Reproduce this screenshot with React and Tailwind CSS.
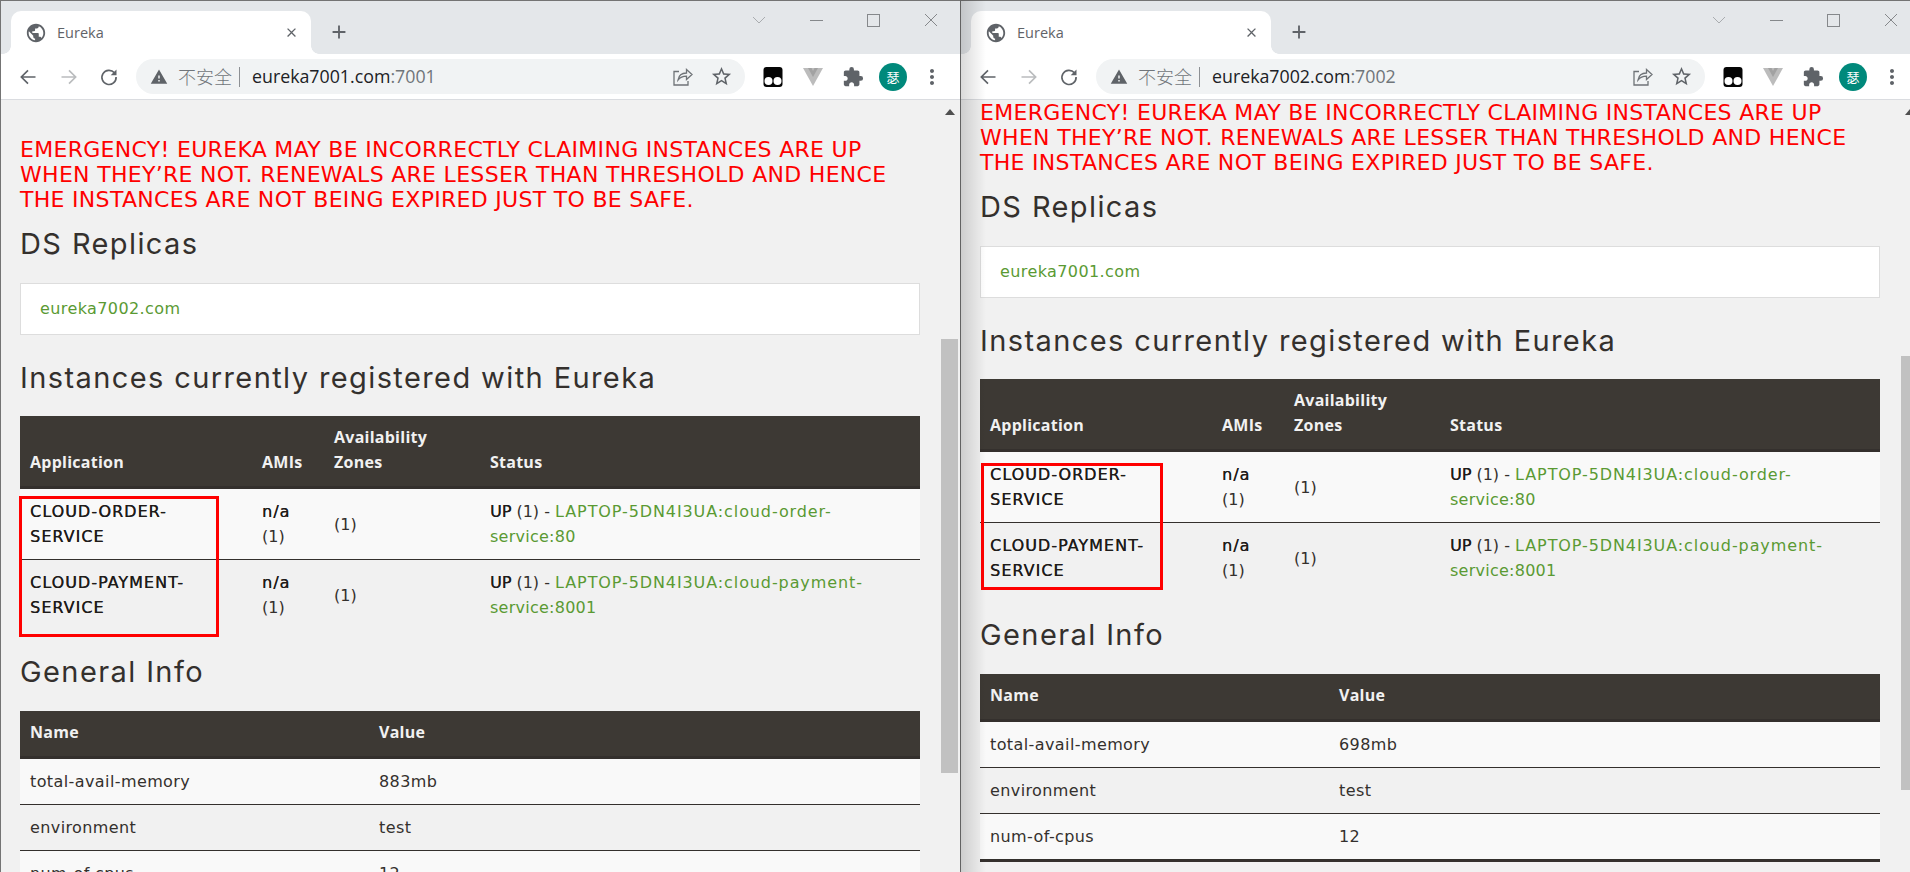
import React from "react";
import { MdPublic, MdClose, MdAdd, MdWarning, MdStarBorder, MdExtension, MdMoreVert } from "react-icons/md";

const bodyFont = "font-['DejaVu_Sans',sans-serif]";
const headFont = "font-['Inter',sans-serif]";
const thClass = "px-[10px] pt-[9px] pb-[11px] font-['Open_Sans',sans-serif] text-[16px] font-bold tracking-[0.25px]";
const linkClass = "text-[#5a9a33]";
const strongClass = "text-[#1f1c1a] [text-shadow:0.3px_0_0_#1f1c1a]";

/* ================= Browser chrome ================= */
function TabStrip() {
  return (
    <div className="flex h-[53px] bg-[#e4e7ea]">
      <div className="relative mt-[10px] ml-[10px] flex h-[43px] w-[300px] items-center rounded-t-[10px] bg-white pl-[14px]">
        <span className="absolute bottom-0 -left-2 h-2 w-2 bg-[radial-gradient(circle_at_0_0,transparent_7.5px,white_8px)]" />
        <span className="absolute -right-2 bottom-0 h-2 w-2 bg-[radial-gradient(circle_at_100%_0,transparent_7.5px,white_8px)]" />
        <MdPublic size={22} className="text-[#5f6368]" />
        <span className="ml-[10px] font-['Open_Sans',sans-serif] text-[14.500px] text-[#5f6368]">Eureka</span>
        <MdClose size={15} className="absolute top-[14px] right-[12px] text-[#5f6368]" />
      </div>
      <MdAdd size={22} className="mt-[20px] ml-[17px] text-[#5f6368]" />
      <div className="ml-auto flex h-[38px] text-[#8a8d90]">
        <div className="flex w-[57.5px] items-center justify-center">
          <svg width="14" height="8" viewBox="0 0 14 8" fill="none" stroke="#a9acaf" strokeWidth="1"><path d="M1 1l6 6 6-6" /></svg>
        </div>
        <div className="flex w-[57.5px] items-center justify-center">
          <div className="h-px w-[13px] bg-[#85888b]" />
        </div>
        <div className="flex w-[57.5px] items-center justify-center">
          <div className="h-[13px] w-[13px] border border-[#85888b]" />
        </div>
        <div className="flex w-[57.5px] items-center justify-center">
          <svg width="14" height="14" viewBox="0 0 14 14" fill="none" stroke="#85888b" strokeWidth="1"><path d="M1 1l12 12M13 1L1 13" /></svg>
        </div>
      </div>
    </div>
  );
}

function Toolbar({ host, port }) {
  return (
    <div className="flex h-[46px] items-center border-b border-[#dadce0] bg-white pl-[7px]">
      <div className="flex w-10 justify-center">
        <svg width="20" height="20" viewBox="0 0 24 24" fill="none" stroke="#5f6368" strokeWidth="2"><path d="M21 12H4M12 4l-8 8 8 8" /></svg>
      </div>
      <div className="flex w-[41px] justify-center">
        <svg width="20" height="20" viewBox="0 0 24 24" fill="none" stroke="#babcbe" strokeWidth="2"><path d="M3 12h17M12 4l8 8-8 8" /></svg>
      </div>
      <div className="flex w-10 justify-center">
        <svg width="20" height="20" viewBox="0 0 24 24" fill="none" stroke="#5f6368" strokeWidth="2">
          <path d="M18.5 7A8.5 8.5 0 1 0 20.5 12" />
          <path d="M21 3v7h-7z" fill="#5f6368" stroke="none" />
        </svg>
      </div>
      <div className="ml-[7px] flex h-[35px] w-[609px] items-center rounded-full bg-[#f1f3f4] pl-[14px]">
        <MdWarning size={18} className="text-[#5f6368]" />
        <span className="ml-[10px] font-['Noto_Sans_CJK_SC',sans-serif] text-[18px] font-light text-[#70757a]">不安全</span>
        <span className="mx-[7px] h-[20px] w-px bg-[#8d9094]" />
        <span className="ml-[5px] font-['Open_Sans',sans-serif] text-[17.800px] text-[#202124]">
          {host}
          <span className="text-[#70757a]">{port}</span>
        </span>
        <svg className="ml-auto" width="20" height="19" viewBox="0 0 20 19" fill="none" stroke="#6f7377" strokeWidth="1.3">
          <path d="M6 4.500H1v13.500h14v-4" />
          <path d="M5 13c.7-4.500 4-7 8.500-7V2.500l5.500 5-5.500 5V9.200C9.500 9.200 7 10.500 5 13z" />
        </svg>
        <MdStarBorder size={23} className="mr-[12px] ml-[17px] text-[#5f6368]" />
      </div>
      <div className="ml-[13px] flex w-[30px] justify-center">
        <svg width="20" height="20" viewBox="0 0 20 20">
          <rect x="0.500" y="0" width="19" height="20" rx="3" fill="#050505" />
          <circle cx="5.500" cy="14" r="4" fill="#fff" />
          <circle cx="14.500" cy="14" r="4" fill="#fff" />
        </svg>
      </div>
      <div className="ml-[10px] flex w-[30px] justify-center">
        <svg width="20" height="18" viewBox="0 0 20 18">
          <path d="M0 0h20L10 18z" fill="#bcbcbc" />
          <path d="M5 0h3.500L10 3l1.500-3H15l-5 9z" fill="#a2a2a2" />
        </svg>
      </div>
      <div className="ml-[10px] flex w-[30px] justify-center">
        <MdExtension size={22} className="text-[#5f6368]" />
      </div>
      <div className="ml-[11px] flex h-[28px] w-[28px] items-center justify-center rounded-full bg-[#00897b] font-['Noto_Sans_CJK_SC',sans-serif] text-[13px] text-white">
        瑟
      </div>
      <div className="ml-[10px] flex w-[30px] justify-center">
        <MdMoreVert size={24} className="text-[#5f6368]" />
      </div>
    </div>
  );
}

/* ================= Eureka page ================= */
const warningLines = [
  "EMERGENCY! EUREKA MAY BE INCORRECTLY CLAIMING INSTANCES ARE UP",
  "WHEN THEY’RE NOT. RENEWALS ARE LESSER THAN THRESHOLD AND HENCE",
  "THE INSTANCES ARE NOT BEING EXPIRED JUST TO BE SAFE.",
];

const instances = [
  { first: "CLOUD-ORDER-", second: "SERVICE", link1: "LAPTOP-5DN4I3UA:cloud-order-", link2: "service:80" },
  { first: "CLOUD-PAYMENT-", second: "SERVICE", link1: "LAPTOP-5DN4I3UA:cloud-payment-", link2: "service:8001" },
];

function Heading({ children, className }) {
  return (
    <h2 className={`${headFont} h-[34px] text-[29px] leading-[34px] tracking-[1.4px] whitespace-nowrap text-[#34302d] ${className}`}>
      {children}
    </h2>
  );
}

function InstanceTable() {
  return (
    <table className="mt-[21px] w-full table-fixed border-collapse text-[16px] leading-[25px] text-[#34302d]">
      <colgroup>
        <col className="w-[232px]" />
        <col className="w-[72px]" />
        <col className="w-[156px]" />
        <col />
      </colgroup>
      <thead className="bg-[#3d3934] text-left text-[#f1f1f1]">
        <tr className="border-b-[3px] border-[#34302d]">
          <th className={`${thClass} align-bottom`}>Application</th>
          <th className={`${thClass} align-bottom`}>AMIs</th>
          <th className={`${thClass} align-bottom`}>Availability<br />Zones</th>
          <th className={`${thClass} align-bottom`}>Status</th>
        </tr>
      </thead>
      <tbody>
        {instances.map((row, i) => (
          <tr key={row.first} className={i === 0 ? "border-b border-[#34302d] bg-[#f9f9f9]" : "bg-[#f1f1f1]"}>
            <td className={`px-[10px] py-[10px] tracking-[1px] ${strongClass}`}>{row.first}<br />{row.second}</td>
            <td className="px-[10px] py-[10px]"><span className={`tracking-[1px] ${strongClass}`}>n/a</span><br />(1)</td>
            <td className="px-[10px] py-[10px]">(1)</td>
            <td className="px-[10px] py-[10px] whitespace-nowrap">
              <span className={strongClass}>UP</span> (1) - <span className={`tracking-[0.9px] ${linkClass}`}>{row.link1}</span><br />
              <span className={`tracking-[0.25px] ${linkClass}`}>{row.link2}</span>
            </td>
          </tr>
        ))}
      </tbody>
    </table>
  );
}

function GeneralTable({ memory }) {
  const rows = [
    ["total-avail-memory", memory],
    ["environment", "test"],
    ["num-of-cpus", "12"],
  ];
  return (
    <table className="mt-[22px] w-full table-fixed border-collapse text-[16px] leading-[25px] tracking-[0.4px] text-[#34302d]">
      <colgroup>
        <col className="w-[349px]" />
        <col />
      </colgroup>
      <thead className="bg-[#3d3934] text-left text-[#f1f1f1]">
        <tr className="border-b-[3px] border-[#34302d]">
          <th className={thClass}>Name</th>
          <th className={thClass}>Value</th>
        </tr>
      </thead>
      <tbody>
        {rows.map(([name, value], i) => (
          <tr
            key={name}
            className={
              (i === 2 ? "border-b-[3px] " : "border-b ") +
              "border-[#34302d] " +
              (i === 1 ? "bg-[#f1f1f1]" : "bg-[#f9f9f9]")
            }
          >
            <td className="px-[10px] py-[10px]">{name}</td>
            <td className="px-[10px] py-[10px]">{value}</td>
          </tr>
        ))}
      </tbody>
    </table>
  );
}

function BrowserWindow({ host, port, replica, memory, offsetClass, thumbClass, markerClass, shaded, outerClass }) {
  return (
    <div className={`relative h-[872px] shrink-0 overflow-hidden ${outerClass}`}>
      <div className="h-[872px] w-[960px] border-t border-l border-[#747474]">
        <TabStrip />
        <Toolbar host={host} port={port} />
        <div className="flex h-[772px] overflow-hidden bg-[#f1f1f1]">
          <main className={`relative h-[772px] w-[939px] shrink-0 overflow-hidden pr-5 pl-[19px] ${bodyFont} ${offsetClass}`}>
            <div className="text-[22px] leading-[25px] tracking-[0.3px] whitespace-nowrap text-[#ff0000]">
              {warningLines.map((line) => (
                <div key={line}>{line}</div>
              ))}
            </div>
            <Heading className="mt-[15px]">DS Replicas</Heading>
            <div className={`mt-[22px] flex h-[52px] items-center border border-[#ddd] bg-white px-[19px] text-[16px] tracking-[0.4px] ${linkClass}`}>
              {replica}
            </div>
            <Heading className="mt-[26px]">Instances currently registered with Eureka</Heading>
            <InstanceTable />
            <Heading className="mt-[25px]">General Info</Heading>
            <GeneralTable memory={memory} />
            <div className={`pointer-events-none absolute border-[3px] border-[#ff0000] ${markerClass}`} />
          </main>
          <div className="relative ml-px w-[17px] shrink-0">
            <svg className="absolute top-[9px] left-[4px]" width="10" height="6" viewBox="0 0 10 6"><path d="M5 0l5 6H0z" fill="#505050" /></svg>
            <div className={`w-[17px] bg-[#c1c1c1] ${thumbClass}`} />
          </div>
        </div>
      </div>
      {shaded && (
        <div className="pointer-events-none absolute inset-y-0 left-0 w-[26px] bg-gradient-to-r from-black/15 to-transparent" />
      )}
    </div>
  );
}

export default function App() {
  return (
    <div className="flex h-[872px] w-[1910px] overflow-hidden bg-white">
      <BrowserWindow
        outerClass="w-[960px]"
        host="eureka7001.com"
        port=":7001"
        replica="eureka7002.com"
        memory="883mb"
        offsetClass="pt-[37px]"
        thumbClass="mt-[239px] h-[434px]"
        markerClass="top-[396px] left-[18px] h-[141px] w-[200px]"
      />
      <BrowserWindow
        outerClass="w-[950px]"
        shaded
        host="eureka7002.com"
        port=":7002"
        replica="eureka7001.com"
        memory="698mb"
        offsetClass="pt-0"
        thumbClass="mt-[256px] h-[434px]"
        markerClass="top-[363px] left-[20px] h-[127px] w-[182px]"
      />
    </div>
  );
}
